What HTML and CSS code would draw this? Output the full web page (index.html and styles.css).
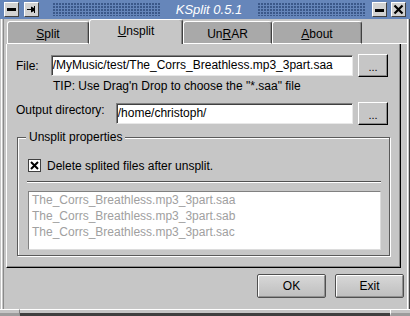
FILE: index.html
```html
<!DOCTYPE html>
<html lang="en">
<head>
    <meta charset="UTF-8">
    <meta name="viewport" content="width=device-width, initial-scale=1.0">
    <title>KSplit 0.5.1</title>
    <link rel="stylesheet" href="styles.css">
</head>
<body>

<div class="window">

    <!-- Title bar -->
    <div class="titlebar">
        <span class="tb-btn">
            <svg width="13" height="13" viewBox="0 0 13 13"><rect x="2" y="5" width="9" height="3" fill="#000"/></svg>
        </span>
        <span class="tb-btn">
            <svg width="13" height="13" viewBox="0 0 13 13"><path d="M2 6.5H7" stroke="#000" stroke-width="1"/><path d="M6 3.5V9.5L9 8V5Z" fill="#000"/><rect x="9" y="3" width="1" height="7" fill="#000"/></svg>
        </span>
        <span class="dots dots-left"></span>
        <span class="title">KSplit 0.5.1</span>
        <span class="dots dots-right"></span>
        <span class="tb-btn">
            <svg width="13" height="13" viewBox="0 0 13 13"><rect x="2" y="6" width="9" height="3" fill="#000"/></svg>
        </span>
        <span class="tb-btn">
            <svg width="13" height="13" viewBox="0 0 13 13"><path d="M2.5 2.5L10.5 10.5M10.5 2.5L2.5 10.5" stroke="#000" stroke-width="2.2"/></svg>
        </span>
    </div>

    <div class="client">

        <!-- Tabs -->
        <div class="tabs">
            <div class="tab tab-split"><u>S</u>plit</div>
            <div class="tab tab-unsplit active"><u>U</u>nsplit</div>
            <div class="tab tab-unrar">Un<u>R</u>AR</div>
            <div class="tab tab-about"><u>A</u>bout</div>
            <div class="tab-fill"></div>
        </div>

        <!-- Unsplit page -->
        <div class="panel">
            <div class="row">
                <span class="label">File:</span>
                <div class="field">/MyMusic/test/The_Corrs_Breathless.mp3_3part.saa</div>
                <button class="browse">...</button>
            </div>
            <div class="tip">TIP: Use Drag'n Drop to choose the "*.saa" file</div>
            <div class="row row-output">
                <span class="label">Output directory:</span>
                <div class="field">/home/christoph/</div>
                <button class="browse">...</button>
            </div>

            <div class="group">
                <div class="legend">Unsplit properties</div>
                <div class="check">
                    <svg class="checkbox" width="13" height="13" viewBox="0 0 13 13">
                        <rect x="0.5" y="0.5" width="12" height="12" fill="#fff" stroke="#404040"/>
                        <path d="M3 3L10 10M10 3L3 10" stroke="#000" stroke-width="2"/>
                    </svg>
                    <span>Delete splited files after unsplit.</span>
                </div>
                <div class="separator"></div>
                <div class="list">
                    <div class="item">The_Corrs_Breathless.mp3_3part.saa</div>
                    <div class="item">The_Corrs_Breathless.mp3_3part.sab</div>
                    <div class="item">The_Corrs_Breathless.mp3_3part.sac</div>
                </div>
            </div>
        </div>

        <!-- Dialog buttons -->
        <div class="footer">
            <button class="push">OK</button>
            <button class="push">Exit</button>
        </div>
    </div>

    <!-- Bottom resize frame -->
    <div class="grip">
        <div class="grip-corner"></div>
        <div class="grip-mid"></div>
        <div class="grip-corner grip-right"></div>
    </div>

</div>

</body>
</html>
```

FILE: styles.css
```css
body {
    margin: 0;
    width: 410px;
    height: 316px;
    overflow: hidden;
    background-color: #c6c6c6;
    font-family: "Liberation Sans", Arial, sans-serif;
    font-size: 12px;
    color: #000;
}
.window {
    height: 316px;
    display: flex;
    flex-direction: column;
}

/* title bar */
.titlebar {
    flex: none;
    height: 19px;
    display: flex;
    align-items: center;
    padding: 0 4px;
    background-color: #6686ba;
}
.tb-btn {
    width: 15px;
    height: 15px;
    box-sizing: border-box;
    display: flex;
    align-items: center;
    justify-content: center;
    background-color: #d2d2d2;
    border: 1px solid;
    border-color: #fff #404040 #404040 #fff;
}
.tb-btn + .tb-btn {
    margin-left: 5px;
}
.dots {
    flex: 1;
    height: 13px;
    background-image: radial-gradient(circle at 1px 1px, #3b5889 0.9px, transparent 1.1px);
    background-size: 3px 3px;
}
.dots-left {
    margin-left: 14px;
}
.dots-right {
    margin-right: 7px;
}
.title {
    padding: 0 16px 0 16px;
    color: #fff;
    font-style: italic;
    font-size: 13px;
}
.titlebar .tb-btn:nth-last-child(2) {
    margin-left: 0;
}
.titlebar .tb-btn:last-child {
    margin-left: 4px;
}

/* client area with window frame lines */
.client {
    flex: 1;
    display: flex;
    flex-direction: column;
    padding: 0 3px 0 6px;
    box-shadow: inset 1px 0 #c6c6c6, inset 2px 0 #fff, inset 3px 0 #c6c6c6, inset 4px 0 #8a8a8a,
                inset -1px 0 #404040, inset -2px 0 #c6c6c6, inset -3px 0 #fff;
}

/* tabs */
.tabs {
    flex: none;
    height: 25px;
    display: flex;
    align-items: flex-end;
    padding-left: 1px;
}
.tab {
    height: 23px;
    box-sizing: border-box;
    display: flex;
    align-items: center;
    justify-content: center;
    padding-top: 3px;
    background-color: #a9a9a9;
    border: 1px solid;
    border-color: #fff #404040 #fff #fff;
    border-radius: 3px 3px 0 0;
    box-shadow: inset -1px 0 #8a8a8a;
}
.tab.active {
    height: 25px;
    padding-top: 0;
    padding-bottom: 2px;
    background-color: #c6c6c6;
    border-bottom: none;
}
.tab-split { width: 82px; }
.tab-unsplit { width: 94px; }
.tab-unrar { width: 89px; }
.tab-about { width: 90px; }
.tab-fill {
    flex: 1;
    border-bottom: 1px solid #fff;
}

/* page */
.panel {
    flex: none;
    height: 224px;
    box-sizing: border-box;
    margin-right: 6px;
    padding: 10px 12px 0 9px;
    border-left: 1px solid #fff;
    border-right: 1px solid #000;
    border-bottom: 1px solid #000;
    box-shadow: inset -1px -1px #8a8a8a;
}
.row {
    display: flex;
    align-items: center;
    height: 23px;
}
.label {
    margin-right: 12px;
}
.row-output .label {
    align-self: flex-start;
    margin-top: 1px;
    margin-right: 11px;
}
.field {
    flex: 1;
    height: 21px;
    box-sizing: border-box;
    padding: 0 2px 0 1px;
    line-height: 19px;
    white-space: nowrap;
    overflow: hidden;
    background-color: #fff;
    border: 1px solid;
    border-color: #808080 #e8e8e8 #e8e8e8 #808080;
    box-shadow: inset 1px 1px #404040;
}
.browse {
    width: 30px;
    height: 23px;
    margin-left: 5px;
    padding: 0 0 3px 0;
    font-family: inherit;
    font-size: 11px;
    line-height: 1;
    display: flex;
    align-items: flex-end;
    justify-content: center;
    background-color: #c6c6c6;
    border: 1px solid;
    border-color: #fff #000 #000 #fff;
    box-shadow: inset -1px -1px #8a8a8a;
}
.tip {
    height: 12px;
    line-height: 12px;
    margin-top: 3px;
    padding-left: 37px;
}
.row-output {
    margin-top: 10px;
}

/* group box */
.group {
    margin: 12px 0 0 1px;
    width: 373px;
    height: 119px;
    box-sizing: border-box;
    padding: 0 8px 0 10px;
    border: 1px solid #5a5a5a;
    box-shadow: inset 1px 1px #fff, 1px 1px #fff;
}
.legend {
    width: fit-content;
    height: 14px;
    line-height: 14px;
    margin: -8px 0 0 -2px;
    padding: 0 3px;
    background-color: #c6c6c6;
}
.check {
    display: flex;
    align-items: center;
    gap: 6px;
    height: 13px;
    margin-top: 15px;
}
.checkbox {
    flex: none;
}
.separator {
    margin: 9px 0 0 -1px;
    height: 1px;
    background-color: #505050;
    box-shadow: 0 1px #fff;
}
.list {
    margin-top: 9px;
    height: 59px;
    box-sizing: border-box;
    padding: 0 3px;
    background-color: #fff;
    border: 1px solid;
    border-color: #808080 #dcdcdc #dcdcdc #808080;
    color: #a0a0a0;
}
.item {
    height: 16px;
    line-height: 16px;
}

/* dialog buttons */
.footer {
    flex: 1;
    display: flex;
    justify-content: flex-end;
    gap: 9px;
    padding: 6px 3px 0 0;
}
.push {
    width: 69px;
    height: 24px;
    font-family: inherit;
    font-size: 12px;
    color: #000;
    background: linear-gradient(#d8d8d8, #bebebe);
    border: 1px solid #505050;
    border-radius: 2px;
    box-shadow: inset 1px 1px #fff, inset -1px -1px #909090;
}

/* bottom frame */
.grip {
    flex: none;
    height: 7px;
    display: flex;
}
.grip-corner {
    width: 20px;
    box-sizing: border-box;
    border-top: 1px solid #fff;
    border-right: 1px solid #808080;
    border-bottom: 3px solid #9c9c9c;
    background-color: #c6c6c6;
}
.grip-right {
    border-right: none;
    border-left: 1px solid #fff;
}
.grip-mid {
    flex: 1;
    border-top: 1px solid #fff;
    border-bottom: 3px solid #404040;
}
```
